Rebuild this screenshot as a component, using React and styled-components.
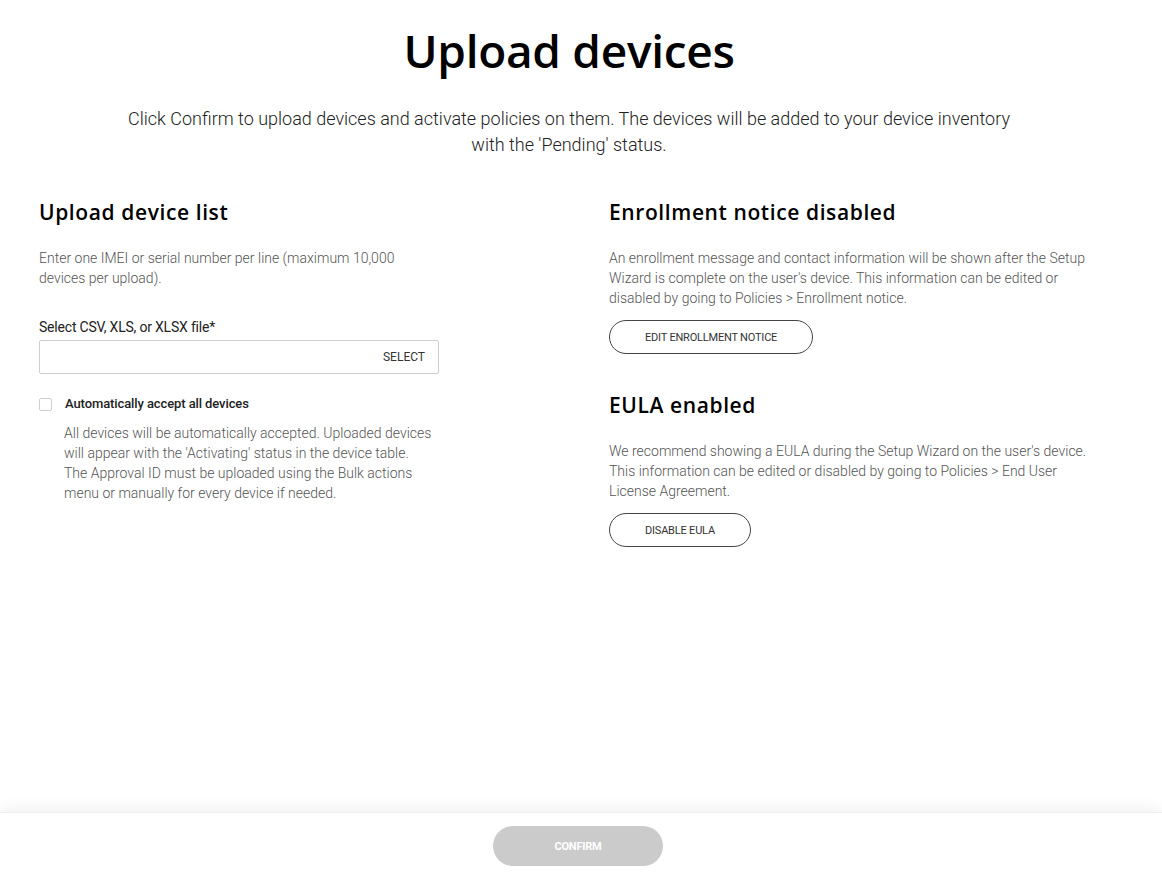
import React from 'react';
import styled, { createGlobalStyle } from 'styled-components';

const GlobalStyle = createGlobalStyle`
  html, body {
    margin: 0;
    padding: 0;
    background: #fff;
  }
  body {
    font-family: Roboto, "Noto Sans", sans-serif;
    color: #222;
  }
  * {
    box-sizing: border-box;
  }
`;

const Page = styled.div`
  height: 876px;
  display: flex;
  flex-direction: column;
`;

const Main = styled.main`
  flex: 1;
  padding: 22px 63px 0 39px;
`;

const Title = styled.h1`
  margin: 0;
  text-align: center;
  font-family: "Open Sans", Lato, sans-serif;
  font-weight: 600;
  font-size: 46px;
  line-height: 56px;
  letter-spacing: -0.3px;
  color: #000;
`;

const Intro = styled.p`
  margin: 28px auto 0;
  max-width: 900px;
  text-align: center;
  font-size: 18px;
  font-weight: 300;
  line-height: 26px;
  color: #222;
`;

const Columns = styled.div`
  display: grid;
  grid-template-columns: 530px 1fr;
  column-gap: 40px;
  margin-top: 40px;
`;

const Column = styled.section`
  display: flex;
  flex-direction: column;
`;

const SectionTitle = styled.h2`
  margin: 0;
  font-family: "Open Sans", Lato, sans-serif;
  font-weight: 600;
  font-size: 21px;
  line-height: 28px;
  letter-spacing: 0.6px;
  color: #000;
  margin-top: ${p => (p.$spaced ? '37px' : '0')};
`;

const Body = styled.p`
  margin: 22px 0 0;
  max-width: ${p => p.$max || 'none'};
  font-size: 14px;
  font-weight: 300;
  line-height: 20px;
  color: #555;
`;

const FieldLabel = styled.label`
  display: block;
  margin-top: 29px;
  font-size: 14px;
  font-weight: 400;
  line-height: 20px;
  letter-spacing: -0.2px;
  color: #222;
`;

const FileInput = styled.div`
  margin-top: 3px;
  width: 400px;
  height: 34px;
  border: 1px solid #cfcfcf;
  border-radius: 2px;
  display: flex;
  align-items: center;
  justify-content: flex-end;
  padding: 0 13px;
`;

const SelectText = styled.span`
  font-size: 12px;
  font-weight: 400;
  color: #333;
`;

const CheckRow = styled.div`
  display: flex;
  align-items: center;
  gap: 13px;
  margin-top: 21px;
`;

const Checkbox = styled.span`
  width: 13px;
  height: 13px;
  border: 1px solid #cfcfcf;
  border-radius: 2px;
  flex: none;
`;

const CheckLabel = styled.span`
  font-size: 13px;
  font-weight: 500;
  line-height: 18px;
  letter-spacing: -0.1px;
  color: #222;
`;

const CheckHelp = styled(Body)`
  margin: 10px 0 0 25px;
  max-width: 369px;
`;

const OutlineButton = styled.button`
  align-self: flex-start;
  margin-top: 12px;
  height: 34px;
  padding: 0 35px;
  border: 1px solid #444;
  border-radius: 17px;
  background: #fff;
  font-family: Roboto, sans-serif;
  font-size: 11px;
  font-weight: 400;
  letter-spacing: -0.2px;
  color: #333;
  text-transform: uppercase;
`;

const Footer = styled.footer`
  height: 64px;
  flex: none;
  display: flex;
  align-items: center;
  justify-content: center;
  padding-right: 6px;
  background: #fff;
  box-shadow: 0 -4px 14px rgba(0, 0, 0, 0.06);
  border-top: 1px solid #eee;
`;

const ConfirmButton = styled.button`
  width: 170px;
  height: 40px;
  margin-top: 3px;
  border: none;
  border-radius: 20px;
  background: #cbcbcb;
  color: #fff;
  font-family: Roboto, sans-serif;
  font-size: 11px;
  font-weight: 700;
  letter-spacing: -0.2px;
`;

export default function App() {
  return (
    <>
      <GlobalStyle />
      <Page>
        <Main>
          <Title>Upload devices</Title>
          <Intro>
            Click Confirm to upload devices and activate policies on them. The devices will be added to your device
            inventory with the 'Pending' status.
          </Intro>
          <Columns>
            <Column>
              <SectionTitle>Upload device list</SectionTitle>
              <Body $max="380px">
                Enter one IMEI or serial number per line (maximum 10,000 devices per upload).
              </Body>
              <FieldLabel>Select CSV, XLS, or XLSX file*</FieldLabel>
              <FileInput>
                <SelectText>SELECT</SelectText>
              </FileInput>
              <CheckRow>
                <Checkbox />
                <CheckLabel>Automatically accept all devices</CheckLabel>
              </CheckRow>
              <CheckHelp>
                All devices will be automatically accepted. Uploaded devices will appear with the 'Activating' status
                in the device table. The Approval ID must be uploaded using the Bulk actions menu or manually for
                every device if needed.
              </CheckHelp>
            </Column>
            <Column>
              <SectionTitle>Enrollment notice disabled</SectionTitle>
              <Body $max="490px">
                An enrollment message and contact information will be shown after the Setup Wizard is complete on the
                user's device. This information can be edited or disabled by going to Policies &gt; Enrollment notice.
              </Body>
              <OutlineButton>Edit enrollment notice</OutlineButton>
              <SectionTitle $spaced>EULA enabled</SectionTitle>
              <Body $max="490px">
                We recommend showing a EULA during the Setup Wizard on the user's device. This information can be
                edited or disabled by going to Policies &gt; End User License Agreement.
              </Body>
              <OutlineButton>Disable EULA</OutlineButton>
            </Column>
          </Columns>
        </Main>
        <Footer>
          <ConfirmButton>CONFIRM</ConfirmButton>
        </Footer>
      </Page>
    </>
  );
}
